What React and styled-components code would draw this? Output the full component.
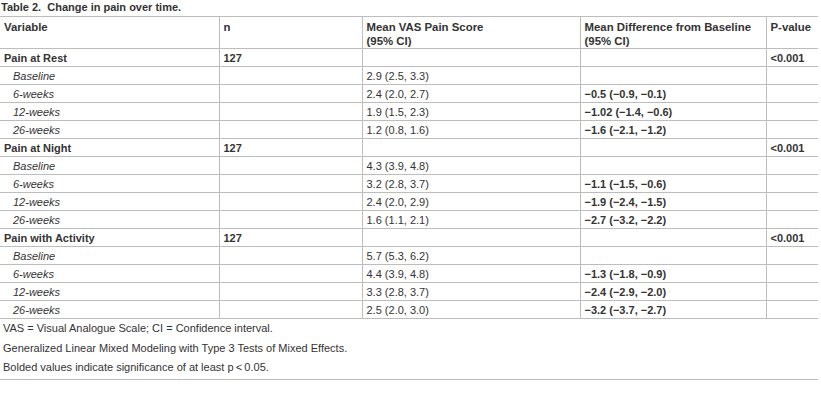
import React from "react";
import styled, { createGlobalStyle } from "styled-components";

const Global = createGlobalStyle`
  body {
    margin: 0;
    background: #fff;
    font-family: "Liberation Sans", Arial, sans-serif;
    color: #333;
  }
`;

const Wrap = styled.div`
  width: 818px;
  padding-top: 1px;
`;

const Caption = styled.div`
  font-size: 11px;
  font-weight: bold;
  line-height: 12px;
  padding-left: 1px;
  height: 15px;
`;

const Table = styled.table`
  width: 818px;
  border-collapse: collapse;
  table-layout: fixed;
  font-size: 11px;
`;

const Th = styled.th`
  text-align: left;
  vertical-align: top;
  font-weight: bold;
  font-size: 11.4px;
  line-height: 14px;
  height: 32px;
  padding: 3px 2px 0 4px;
  box-sizing: border-box;
  white-space: nowrap;
  border: 1px solid #bdbdbd;
  border-left: ${(p) => (p.$first ? "none" : "1px solid #bdbdbd")};
  border-right: ${(p) => (p.$last ? "none" : "1px solid #bdbdbd")};
`;

const Td = styled.td`
  height: 18px;
  padding: 0 2px 0 ${(p) => (p.$indent ? "13px" : "4px")};
  box-sizing: border-box;
  line-height: 16px;
  vertical-align: middle;
  font-weight: ${(p) => (p.$bold ? "bold" : "normal")};
  font-style: ${(p) => (p.$italic ? "italic" : "normal")};
  white-space: nowrap;
  border: 1px solid #bdbdbd;
  border-left: ${(p) => (p.$first ? "none" : "1px solid #bdbdbd")};
  border-right: ${(p) => (p.$last ? "none" : "1px solid #bdbdbd")};
`;

const Notes = styled.div`
  font-size: 11px;
  padding: 0 0 1px 3px;
  border-bottom: 1px solid #bdbdbd;
`;

const Note = styled.p`
  margin: 0;
  line-height: 19.5px;
`;

const groups = [
  {
    name: "Pain at Rest",
    p: "<0.001",
    rows: [
      ["Baseline", "2.9 (2.5, 3.3)", ""],
      ["6-weeks", "2.4 (2.0, 2.7)", "−0.5 (−0.9, −0.1)"],
      ["12-weeks", "1.9 (1.5, 2.3)", "−1.02 (−1.4, −0.6)"],
      ["26-weeks", "1.2 (0.8, 1.6)", "−1.6 (−2.1, −1.2)"],
    ],
  },
  {
    name: "Pain at Night",
    p: "<0.001",
    rows: [
      ["Baseline", "4.3 (3.9, 4.8)", ""],
      ["6-weeks", "3.2 (2.8, 3.7)", "−1.1 (−1.5, −0.6)"],
      ["12-weeks", "2.4 (2.0, 2.9)", "−1.9 (−2.4, −1.5)"],
      ["26-weeks", "1.6 (1.1, 2.1)", "−2.7 (−3.2, −2.2)"],
    ],
  },
  {
    name: "Pain with Activity",
    p: "<0.001",
    rows: [
      ["Baseline", "5.7 (5.3, 6.2)", ""],
      ["6-weeks", "4.4 (3.9, 4.8)", "−1.3 (−1.8, −0.9)"],
      ["12-weeks", "3.3 (2.8, 3.7)", "−2.4 (−2.9, −2.0)"],
      ["26-weeks", "2.5 (2.0, 3.0)", "−3.2 (−3.7, −2.7)"],
    ],
  },
];

export default function App() {
  return (
    <>
      <Global />
      <Wrap>
        <Caption>Table 2.&nbsp; Change in pain over time.</Caption>
        <Table>
          <colgroup>
            <col style={{ width: 219 }} />
            <col style={{ width: 143 }} />
            <col style={{ width: 218 }} />
            <col style={{ width: 186 }} />
            <col style={{ width: 52 }} />
          </colgroup>
          <thead>
            <tr>
              <Th $first>Variable</Th>
              <Th>n</Th>
              <Th>
                Mean VAS Pain Score
                <br />
                (95% CI)
              </Th>
              <Th>
                Mean Difference from Baseline
                <br />
                (95% CI)
              </Th>
              <Th $last>P-value</Th>
            </tr>
          </thead>
          <tbody>
            {groups.map((g) => (
              <React.Fragment key={g.name}>
                <tr>
                  <Td $first $bold>{g.name}</Td>
                  <Td $bold>127</Td>
                  <Td />
                  <Td />
                  <Td $last $bold>{g.p}</Td>
                </tr>
                {g.rows.map((r) => (
                  <tr key={g.name + r[0]}>
                    <Td $first $italic $indent>{r[0]}</Td>
                    <Td />
                    <Td>{r[1]}</Td>
                    <Td $bold>{r[2]}</Td>
                    <Td $last />
                  </tr>
                ))}
              </React.Fragment>
            ))}
          </tbody>
        </Table>
        <Notes>
          <Note>VAS = Visual Analogue Scale; CI = Confidence interval.</Note>
          <Note>Generalized Linear Mixed Modeling with Type 3 Tests of Mixed Effects.</Note>
          <Note>Bolded values indicate significance of at least p&thinsp;&lt;&thinsp;0.05.</Note>
        </Notes>
      </Wrap>
    </>
  );
}
